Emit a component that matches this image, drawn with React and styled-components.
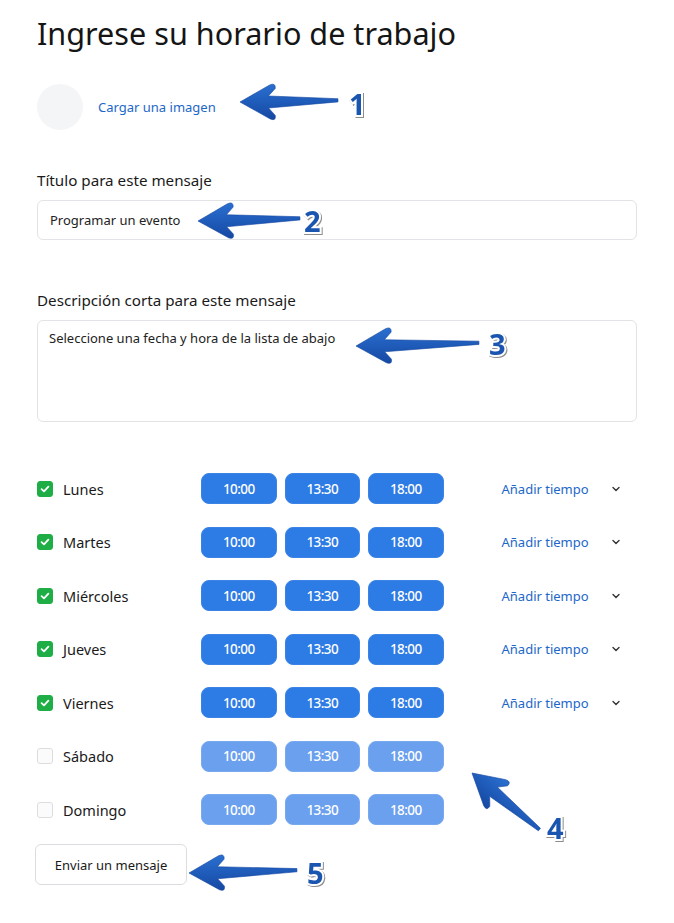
import React from "react";
import styled, { createGlobalStyle } from "styled-components";

const GlobalStyle = createGlobalStyle`
  html, body {
    margin: 0;
    padding: 0;
    background: #ffffff;
  }
  body {
    font-family: "Noto Sans", "Open Sans", Arial, sans-serif;
    color: #1c1c1c;
  }
`;

const Page = styled.div`
  position: relative;
  width: 674px;
  min-height: 923px;
  box-sizing: border-box;
  padding: 12px 37px 0 37px;
`;

const Title = styled.h1`
  margin: 0;
  font-size: 30.6px;
  line-height: 42px;
  font-weight: 400;
  color: #151515;
`;

const UploadRow = styled.div`
  display: flex;
  align-items: center;
  gap: 15px;
  margin-top: 30px;
`;

const Avatar = styled.div`
  width: 46px;
  height: 46px;
  border-radius: 50%;
  background: #f4f5f7;
`;

const Link = styled.a`
  color: #1d67c8;
  font-size: 13px;
  text-decoration: none;
  cursor: pointer;
`;

const Field = styled.div`
  display: flex;
  flex-direction: column;
  gap: 10px;
  margin-top: ${(p) => p.$top}px;
`;

const Label = styled.label`
  font-size: 15.2px;
  line-height: 20px;
  color: #1a1a1a;
`;

const Box = styled.div`
  box-sizing: border-box;
  width: 600px;
  height: ${(p) => p.$height}px;
  border: 1px solid #e1e3e6;
  border-radius: 6px;
  padding: ${(p) => (p.$multi ? "8px 11px" : "0 12px")};
  display: flex;
  align-items: ${(p) => (p.$multi ? "flex-start" : "center")};
  font-size: 13px;
  color: #222;
`;

const Schedule = styled.div`
  display: flex;
  flex-direction: column;
  gap: 22.5px;
  margin-top: 51px;
`;

const Row = styled.div`
  display: flex;
  align-items: center;
  height: 31px;
`;

const Day = styled.div`
  display: flex;
  align-items: center;
  gap: 10px;
  width: 164px;
  font-size: 14.5px;
  color: #1a1a1a;
`;

const Check = styled.span`
  box-sizing: border-box;
  width: 16px;
  height: 16px;
  border-radius: 3px;
  display: flex;
  align-items: center;
  justify-content: center;
  background: ${(p) => (p.$on ? "#1fae45" : "#fbfbfb")};
  border: 1px solid ${(p) => (p.$on ? "#1fae45" : "#dcdde0")};
`;

const Pills = styled.div`
  display: flex;
  gap: 8px;
`;

const Pill = styled.div`
  box-sizing: border-box;
  width: 75.5px;
  height: 31px;
  border-radius: 8px;
  display: flex;
  align-items: center;
  justify-content: center;
  color: #ffffff;
  font-size: 13.5px;
  font-weight: 500;
  letter-spacing: -0.6px;
  background: ${(p) => (p.$off ? "#6aa0ee" : "#2d7be4")};
  border: 1px solid ${(p) => (p.$off ? "#78a9ef" : "#3b84e5")};
`;

const AddTime = styled.div`
  display: flex;
  align-items: center;
  gap: 22px;
  margin-left: 58px;
  color: #1d67c8;
  font-size: 13px;
`;

const Chevron = styled.svg`
  width: 10px;
  height: 10px;
  color: #333;
`;

const SendButton = styled.button`
  margin-top: 19px;
  margin-left: -2px;
  width: 152px;
  height: 41px;
  background: #fff;
  border: 1px solid #dcdde0;
  border-radius: 6px;
  font-family: inherit;
  font-size: 13px;
  color: #1a1a1a;
  cursor: pointer;
`;

const Overlay = styled.svg`
  position: absolute;
  left: 0;
  top: 0;
  width: 674px;
  height: 923px;
  pointer-events: none;
`;

const Num = styled.text`
  font-family: "Noto Sans", "Open Sans", sans-serif;
  font-size: 29px;
  font-weight: 700;
  fill: #1a55b0;
  stroke: #ffffff;
  stroke-width: 4px;
  paint-order: stroke;
  filter: drop-shadow(1px 1px 0.6px rgba(0, 0, 0, 0.45));
`;

const days = [
  { name: "Lunes", on: true },
  { name: "Martes", on: true },
  { name: "Miércoles", on: true },
  { name: "Jueves", on: true },
  { name: "Viernes", on: true },
  { name: "Sábado", on: false },
  { name: "Domingo", on: false },
];

const times = ["10:00", "13:30", "18:00"];

const Arrow = ({ x, y, len, angle = 0 }) => (
  <g transform={`translate(${x} ${y}) rotate(${angle})`}>
    <path
      d={`M0,0 L30,-16.5 Q36,-19 35.5,-13 L28.5,-5.5 L${len},-1.6 L${len},1.6 L28.5,6.5 L35,14 Q36,20 30,17.5 Z`}
      fill="url(#arrowFill)"
      stroke="#1447a0"
      strokeWidth="0.6"
      strokeLinejoin="round"
    />
  </g>
);

const App = () => {
  return (
    <Page>
      <GlobalStyle />
      <Title>Ingrese su horario de trabajo</Title>

      <UploadRow>
        <Avatar />
        <Link>Cargar una imagen</Link>
      </UploadRow>

      <Field $top={40}>
        <Label>Título para este mensaje</Label>
        <Box $height={40}>Programar un evento</Box>
      </Field>

      <Field $top={50}>
        <Label>Descripción corta para este mensaje</Label>
        <Box $height={102} $multi>
          Seleccione una fecha y hora de la lista de abajo
        </Box>
      </Field>

      <Schedule>
        {days.map((d) => (
          <Row key={d.name}>
            <Day>
              <Check $on={d.on}>
                {d.on && (
                  <svg width="10" height="10" viewBox="0 0 10 10">
                    <path d="M1.6 5.2 L4 7.4 L8.4 2.6" fill="none" stroke="#fff" strokeWidth="1.8" strokeLinecap="round" strokeLinejoin="round" />
                  </svg>
                )}
              </Check>
              {d.name}
            </Day>
            <Pills>
              {times.map((t) => (
                <Pill key={t} $off={!d.on}>{t}</Pill>
              ))}
            </Pills>
            {d.on && (
              <AddTime>
                Añadir tiempo
                <Chevron viewBox="0 0 10 10">
                  <path d="M2 3.5 L5 6.5 L8 3.5" fill="none" stroke="currentColor" strokeWidth="1.4" strokeLinecap="round" strokeLinejoin="round" />
                </Chevron>
              </AddTime>
            )}
          </Row>
        ))}
      </Schedule>

      <SendButton>Enviar un mensaje</SendButton>

      <Overlay viewBox="0 0 674 923">
        <defs>
          <linearGradient id="arrowFill" x1="0" y1="0" x2="0" y2="1">
            <stop offset="0" stopColor="#2a6fd0" />
            <stop offset="1" stopColor="#1548a3" />
          </linearGradient>
        </defs>
        <Arrow x={240} y={102} len={98} angle={-1} />
        <Num x={349} y={115}>1</Num>
        <Arrow x={198} y={221} len={102} angle={-1.5} />
        <Num x={304} y={232}>2</Num>
        <Arrow x={356} y={346} len={123} angle={-1.5} />
        <Num x={489} y={355}>3</Num>
        <Arrow x={472} y={773} len={88} angle={40} />
        <Num x={547} y={839}>4</Num>
        <Arrow x={189} y={873} len={108} angle={-1.5} />
        <Num x={307} y={884}>5</Num>
      </Overlay>
    </Page>
  );
};

export default App;
